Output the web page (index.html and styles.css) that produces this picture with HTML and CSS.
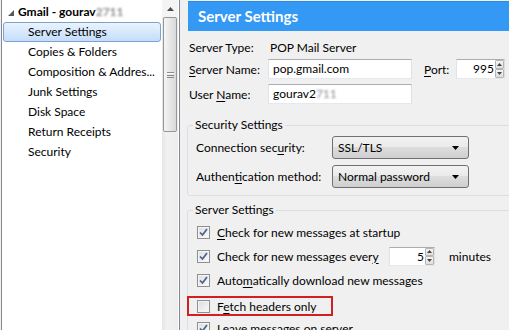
FILE: index.html
```html
<!DOCTYPE html>
<html lang="en">
<head>
	<meta charset="UTF-8">
	<title>Account Settings</title>
	<link rel="stylesheet" href="styles.css">
</head>
<body>
	<div class="window">
		<aside class="tree-pane">
			<ul class="tree">
				<li class="account"><svg class="twisty" width="6" height="6" viewBox="0 0 6 6"><polygon points="6,0 6,6 0,6" fill="#595959"/></svg>Gmail - gourav<span class="blurred">2711</span></li>
				<li class="selected">Server Settings</li>
				<li>Copies &amp; Folders</li>
				<li>Composition &amp; Addres...</li>
				<li>Junk Settings</li>
				<li>Disk Space</li>
				<li>Return Receipts</li>
				<li>Security</li>
			</ul>
			<div class="scrollbar">
				<div class="scroll-up"><svg width="7" height="4" viewBox="0 0 7 4"><polygon points="0,4 3.5,0 7,4" fill="#4d4d4d"/></svg></div>
				<div class="thumb"><span class="grip"></span></div>
			</div>
		</aside>
		<main class="settings">
			<h1 class="banner">Server Settings</h1>
			<div class="row row-type">
				<span class="label">Server Type:</span>
				<span class="value">POP Mail Server</span>
			</div>
			<div class="row row-name">
				<span class="label"><u>S</u>erver Name:</span>
				<span class="text-input">pop.gmail.com</span>
				<span class="port-label"><u>P</u>ort:</span>
				<span class="spin port">
					<span class="spin-value">995</span>
					<span class="spin-btns">
						<span class="spin-btn"><svg width="5" height="3" viewBox="0 0 5 3"><polygon points="0,3 2.5,0 5,3" fill="#444"/></svg></span>
						<span class="spin-btn"><svg width="5" height="3" viewBox="0 0 5 3"><polygon points="0,0 2.5,3 5,0" fill="#444"/></svg></span>
					</span>
				</span>
			</div>
			<div class="row row-user">
				<span class="label">User <u>N</u>ame:</span>
				<span class="text-input">gourav2<span class="blurred">711</span></span>
			</div>

			<fieldset class="group security">
				<legend>Security Settings</legend>
				<div class="select-row">
					<span class="select-label">Connection sec<u>u</u>rity:</span>
					<span class="dropdown">SSL/TLS<svg class="drop-arrow" width="7" height="4" viewBox="0 0 7 4"><polygon points="0,0 3.5,4 7,0" fill="#000"/></svg></span>
				</div>
				<div class="select-row">
					<span class="select-label">Authen<u>t</u>ication method:</span>
					<span class="dropdown">Normal password<svg class="drop-arrow" width="7" height="4" viewBox="0 0 7 4"><polygon points="0,0 3.5,4 7,0" fill="#000"/></svg></span>
				</div>
			</fieldset>

			<fieldset class="group server">
				<legend>Server Settings</legend>
				<div class="check">
					<span class="box checked"></span>
					<span><u>C</u>heck for new messages at startup</span>
				</div>
				<div class="check">
					<span class="box checked"></span>
					<span class="check-every">Check for new messages ever<u>y</u></span>
					<span class="spin minutes">
						<span class="spin-value">5</span>
						<span class="spin-btns">
							<span class="spin-btn"><svg width="5" height="3" viewBox="0 0 5 3"><polygon points="0,3 2.5,0 5,3" fill="#444"/></svg></span>
							<span class="spin-btn"><svg width="5" height="3" viewBox="0 0 5 3"><polygon points="0,0 2.5,3 5,0" fill="#444"/></svg></span>
						</span>
					</span>
					<span class="unit">minutes</span>
				</div>
				<div class="check">
					<span class="box checked"></span>
					<span>Auto<u>m</u>atically download new messages</span>
				</div>
				<div class="check highlight">
					<span class="box"></span>
					<span>F<u>e</u>tch headers only</span>
				</div>
				<div class="check">
					<span class="box checked"></span>
					<span>Leave messages on server</span>
				</div>
			</fieldset>
		</main>
	</div>
</body>
</html>
```
FILE: styles.css
```css
* {margin:0;padding:0;box-sizing:border-box;}
body {width:509px;height:330px;overflow:hidden;background:#f0f0f0;font:12px "Lato","Noto Sans",sans-serif;color:#000;}
u {text-decoration:underline;text-underline-offset:2px;}
.window {display:flex;height:330px;}
.blurred {color:#8c8c8c;filter:blur(1.2px);}

/* account tree */
.tree-pane {display:flex;flex:0 0 179px;margin-left:1px;border-left:1px solid #828790;border-right:1px solid #828790;background:#fff;}
.tree {list-style:none;width:160px;padding-top:2px;}
.tree li {height:20px;line-height:20px;padding-left:26px;white-space:nowrap;}
.tree .account {display:flex;align-items:center;padding-left:6px;font-weight:bold;}
.twisty {margin:2px 4px 0 0;}
.tree .selected {margin:0 1px;padding-left:24px;line-height:18px;border:1px solid #7da2ce;border-radius:3px;background:linear-gradient(#eaf3fd,#c4ddfc);}

.scrollbar {width:16px;display:flex;flex-direction:column;background:linear-gradient(90deg,#e6e6e6,#f1f1f1 30%,#ededed);}
.scroll-up {height:17px;display:flex;align-items:center;justify-content:center;background:#f4f4f4;}
.thumb {height:115px;margin:0 1px;border:1px solid #979797;border-radius:2px;background:linear-gradient(90deg,#f5f5f5,#e7e7e7 50%,#d9d9d9);display:flex;align-items:center;justify-content:center;}
.grip {width:7px;height:6px;border-top:1px solid #8a8a8a;border-bottom:1px solid #8a8a8a;background:linear-gradient(#fff 0 1px,transparent 1px 2px,#8a8a8a 2px 3px,transparent 3px);}

/* settings panel */
.settings {flex:1;margin-left:7px;overflow:hidden;}
.banner {margin:1px 0 0 1px;height:30px;padding-left:10px;background:#3399f5;border-top:1px solid #2f8be0;color:#fff;font-size:15px;font-weight:bold;line-height:29px;}
.row {display:flex;align-items:center;height:20px;padding-left:2px;}
.row-type {margin-top:6px;}
.row-name {margin-top:2px;}
.row-user {margin-top:5px;}
.label {width:79px;flex:none;}
.value {padding-left:2px;}
.text-input {width:144px;height:20px;padding-left:4px;line-height:18px;background:#fff;border:1px solid;border-color:#abadb3 #dbdfe6 #e3e9ef #e2e3ea;}
.port-label {width:32px;margin-left:12px;}

.spin {display:flex;align-items:stretch;background:#fff;border:1px solid;border-color:#abadb3 #dbdfe6 #e3e9ef #e2e3ea;}
.spin-value {flex:1;text-align:right;padding-right:1px;line-height:18px;}
.spin-btns {display:flex;flex-direction:column;width:9px;}
.spin-btn {flex:1;display:flex;align-items:center;justify-content:center;border:1px solid #b5b5b5;border-radius:1px;background:linear-gradient(#f6f6f6,#dedede);}
.port {width:49px;height:20px;}
.minutes {width:46px;height:19px;flex:none;}

.group {border:1px solid #d5dfe5;border-radius:3px;margin-right:-20px;}
.group legend {margin-left:5px;padding:0 2px;line-height:16px;}
.security {margin-top:13px;padding:3px 0 7px;}
.select-row {display:flex;align-items:center;height:23px;padding-left:8px;}
.select-row + .select-row {margin-top:6px;}
.select-label {width:136px;flex:none;}
.dropdown {display:flex;align-items:center;justify-content:space-between;width:137px;height:23px;padding:0 9px 0 5px;border:1px solid #707070;border-radius:3px;background:linear-gradient(#f2f2f2,#ebebeb 45%,#dddddd 50%,#cfcfcf);}

.server {margin-top:6px;padding:2px 0 0;}
.check {display:flex;align-items:center;height:24px;padding-left:9px;white-space:nowrap;}
.box {width:13px;height:13px;margin-right:7px;flex:none;border:1px solid #8e8f8f;background:linear-gradient(135deg,#dcdcdc,#fbfbfb);box-shadow:inset 0 0 0 1px #f4f4f4;}
.box.checked {background:url("data:image/svg+xml,%3Csvg xmlns='http://www.w3.org/2000/svg' width='11' height='11'%3E%3Cpath d='M2 5.5 L4.5 8 L9 2' fill='none' stroke='%234a5f8e' stroke-width='1.7'/%3E%3C/svg%3E") center no-repeat,linear-gradient(135deg,#dcdcdc,#fbfbfb);}
.check-every {width:172px;flex:none;}
.unit {margin-left:14px;}
.check.highlight {margin:4px 0 0 -1px;width:146px;height:20px;padding-left:8px;border:2px solid #d21f1f;}
```
